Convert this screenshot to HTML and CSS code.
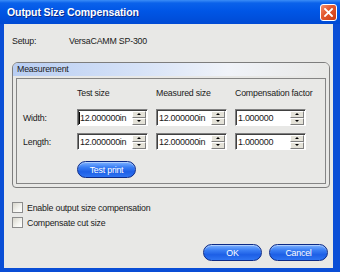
FILE: index.html
```html
<!DOCTYPE html>
<html lang="en">
<head>
    <meta charset="UTF-8">
    <title>Output Size Compensation</title>
    <link rel="stylesheet" href="styles.css">
</head>
<body>
<div class="window">
    <div class="titlebar">
        <span class="title">Output Size Compensation</span>
        <span class="close">
            <svg width="9" height="9" viewBox="0 0 9 9"><path d="M1 1L8 8M8 1L1 8" stroke="#fff" stroke-width="1.8" stroke-linecap="square"/></svg>
        </span>
    </div>
    <div class="client">
        <div class="setup">
            <span class="setup-label">Setup:</span>
            <span>VersaCAMM SP-300</span>
        </div>
        <div class="group">
            <div class="group-title">Measurement</div>
            <div class="group-body">
                <div class="row head">
                    <span class="lbl"></span>
                    <span class="col">Test size</span>
                    <span class="col">Measured size</span>
                    <span class="col">Compensation factor</span>
                </div>
                <div class="row fields">
                    <span class="lbl">Width:</span>
                    <div class="field"><span class="val"><i class="caret"></i>12.000000in</span><span class="spin"><i class="up"></i><i class="down"></i></span></div>
                    <div class="field"><span class="val">12.000000in</span><span class="spin"><i class="up"></i><i class="down"></i></span></div>
                    <div class="field"><span class="val">1.000000</span><span class="spin"><i class="up"></i><i class="down"></i></span></div>
                </div>
                <div class="row fields second">
                    <span class="lbl">Length:</span>
                    <div class="field"><span class="val">12.000000in</span><span class="spin"><i class="up"></i><i class="down"></i></span></div>
                    <div class="field"><span class="val">12.000000in</span><span class="spin"><i class="up"></i><i class="down"></i></span></div>
                    <div class="field"><span class="val">1.000000</span><span class="spin"><i class="up"></i><i class="down"></i></span></div>
                </div>
                <div class="row print">
                    <span class="lbl"></span>
                    <button class="btn">Test print</button>
                </div>
            </div>
        </div>
        <label class="check first"><span class="box"></span>Enable output size compensation</label>
        <label class="check"><span class="box"></span>Compensate cut size</label>
        <div class="actions">
            <button class="btn">OK</button>
            <button class="btn">Cancel</button>
        </div>
    </div>
</div>
</body>
</html>
```

FILE: styles.css
```css
body{
    margin: 0;
    font-family: "Liberation Sans", Arial, sans-serif;
    font-size: 8.8px;
    letter-spacing: -0.2px;
    color: #1a1a1a;
}
.window{
    width: 340px;
    height: 272px;
    display: flex;
    flex-direction: column;
    background: #0a4ed6;
}
.titlebar{
    height: 24px;
    flex: none;
    display: flex;
    align-items: center;
    justify-content: space-between;
    padding: 0 3px 0 7px;
    background: linear-gradient(#3b8df7 0, #0b62ea 3px, #0056e6 45%, #004ad4 100%);
}
.title{
    color: #fff;
    font-weight: bold;
    font-size: 10.5px;
    letter-spacing: -0.1px;
    text-shadow: 1px 1px 0 #0a2c8c;
}
.close{
    width: 15px;
    height: 15px;
    border: 1px solid #fff;
    border-radius: 3px;
    display: flex;
    align-items: center;
    justify-content: center;
    background: linear-gradient(135deg, #f39070 0, #e45a30 40%, #cc3c12 100%);
}
.client{
    flex: 1;
    margin: 0 7px 4px 4px;
    background: #e8e8e6;
    padding: 11px 0 0 8px;
}
.setup{
    display: flex;
    height: 12px;
    align-items: center;
}
.setup-label{
    width: 57px;
}
.group{
    margin-top: 15px;
    width: 316px;
    height: 124px;
    border: 1px solid #7d7d7d;
    border-radius: 6px 6px 4px 4px;
    display: flex;
    flex-direction: column;
}
.group-title{
    height: 13px;
    line-height: 13px;
    padding-left: 4px;
    border-radius: 5px 5px 0 0;
    background: linear-gradient(to right, #b8cdf2 0, #d6e2f7 40%, #f0f3f9 68%, #e8e8e6 100%);
}
.group-body{
    flex: 1;
    margin: 2px 3px 3px 3px;
    border: 1px solid #858585;
    padding: 9px 0 0 6px;
}
.row{
    display: flex;
    align-items: center;
    column-gap: 8px;
}
.lbl{
    width: 46px;
}
.head{
    height: 10px;
}
.col{
    width: 71px;
    white-space: nowrap;
}
.fields{
    margin-top: 11px;
    height: 17px;
}
.fields.second{
    margin-top: 7px;
}
.field{
    width: 71px;
    height: 17px;
    box-sizing: border-box;
    display: flex;
    align-items: center;
    background: #fff;
    border-top: 1px solid #808080;
    border-left: 1px solid #808080;
    border-right: 1px solid #fff;
    border-bottom: 1px solid #fff;
    box-shadow: inset 1px 1px 0 #404040;
    padding: 0 1px 0 2px;
}
.val{
    flex: 1;
    position: relative;
    white-space: nowrap;
    font-size: 9px;
    letter-spacing: -0.3px;
}
.caret{
    position: absolute;
    left: -1px;
    top: -1px;
    width: 1px;
    height: 12px;
    background: #000;
}
.spin{
    width: 14px;
    height: 14px;
    display: flex;
    flex-direction: column;
}
.spin i{
    flex: 1;
    background: #e4e2d8;
    border: 1px solid;
    border-color: #fff #808080 #808080 #fff;
    display: flex;
    align-items: center;
    justify-content: center;
}
.spin i::after{
    content: "";
    border-left: 2px solid transparent;
    border-right: 2px solid transparent;
}
.spin .up::after{
    border-bottom: 2px solid #000;
}
.spin .down::after{
    border-top: 2px solid #000;
}
.print{
    margin-top: 11px;
}
.btn{
    width: 59px;
    height: 17px;
    padding: 0;
    border: 1px solid #0c2a86;
    border-radius: 9px;
    color: #fff;
    font-family: "Liberation Sans", Arial, sans-serif;
    font-size: 8.8px;
    letter-spacing: -0.2px;
    background: linear-gradient(#7fb2ff 0, #3a7ef4 35%, #1d5fe6 65%, #2f74f2 100%);
    box-shadow: inset 0 1px 0 rgba(255,255,255,.4);
}
.check{
    display: flex;
    align-items: center;
    height: 11px;
    margin-top: 4px;
}
.check.first{
    margin-top: 14px;
}
.box{
    width: 9px;
    height: 9px;
    border: 1px solid #8c8c8c;
    margin-right: 4px;
    background: linear-gradient(135deg, #d8d6cc 0, #f4f4f0 60%, #fff 100%);
}
.actions{
    margin-top: 16px;
    padding-right: 5px;
    display: flex;
    justify-content: flex-end;
    column-gap: 7px;
}
```
